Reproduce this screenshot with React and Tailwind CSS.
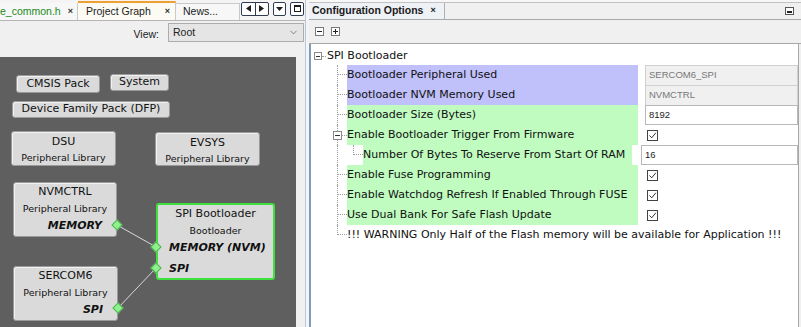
import React from "react";
import { ChevronDown } from "lucide-react";

const sans = "font-['DejaVu_Sans',sans-serif]";
const ui = "font-['Liberation_Sans',Arial,sans-serif]";

function TabButtons() {
  return (
    <div className="flex items-center gap-[4px] h-[20px] pb-[3px] ml-[1px]">
      <div className="w-[28px] h-[14px] rounded-[2px] border-[1.5px] border-[#2f3b50] bg-white flex">
        <div className="flex-1 flex items-center justify-center border-r border-[#2f3b50]">
          <svg width="5" height="7" viewBox="0 0 5 7"><path d="M5 0 L0 3.5 L5 7 Z" fill="#1d1d1d" /></svg>
        </div>
        <div className="flex-1 flex items-center justify-center">
          <svg width="5" height="7" viewBox="0 0 5 7"><path d="M0 0 L5 3.5 L0 7 Z" fill="#1d1d1d" /></svg>
        </div>
      </div>
      <div className="w-[13px] h-[14px] rounded-[2px] border-[1.5px] border-[#2f3b50] bg-white flex items-center justify-center">
        <svg width="7" height="4" viewBox="0 0 7 4"><path d="M0 0 L7 0 L3.5 4 Z" fill="#1d1d1d" /></svg>
      </div>
      <div className="w-[14px] h-[14px] rounded-[2px] border-[1.5px] border-[#2f3b50] bg-white flex items-center justify-center">
        <div className="w-[7px] h-[7px] border border-[#1d1d1d] border-t-2" />
      </div>
    </div>
  );
}

function Tabs() {
  return (
    <div className={`h-[20px] flex items-end bg-[#f4f4f4] ${ui} text-[10.5px]`}>
      <div className="w-[78px] h-[17px] flex items-center justify-between pr-[4px] border-r border-[#c9c9c9] bg-[#f7f7f7]">
        <span className="text-[#208a20]">e_common.h</span>
        <span className="text-[9px] font-bold text-[#333]">×</span>
      </div>
      <div className="w-[98px] h-[19px] flex items-center justify-between pl-[8px] pr-[5px] border-t-2 border-t-[#f0a030] border-r border-r-[#c9c9c9] bg-[#fbfaf3] text-[#222]">
        <span>Project Graph</span>
        <span className="text-[9px] font-bold text-[#333]">×</span>
      </div>
      <div className="w-[64px] h-[17px] flex items-center pl-[7px] border-t border-r border-[#c9c9c9] bg-[#f7f7f7] text-[#222]">
        News...
      </div>
      <TabButtons />
    </div>
  );
}

function Node({ x, y, w, h, green, className = "", children }) {
  return (
    <div
      className={`absolute rounded-[3px] bg-[#dadada] flex flex-col ${sans} text-[#111] ${
        green ? "border-2 border-[#3ee03e]" : "border border-[#9a9a9a] shadow-[inset_1px_1px_0_#f2f2f2]"
      } ${className}`}
      style={{ left: x, top: y, width: w, height: h }}
    >
      {children}
    </div>
  );
}

function Diamond({ x, y }) {
  return (
    <div
      className="absolute w-[8px] h-[8px] rotate-45 bg-[#8ff08f] border border-[#4fb54f]"
      style={{ left: x - 4, top: y - 4 }}
    />
  );
}

function Graph() {
  return (
    <div className="w-[296px] h-full relative bg-[#5f5f5f] overflow-hidden">
      <Node x={16} y={18} w={84} h={18} className="items-center justify-center text-[11px]">CMSIS Pack</Node>
      <Node x={110} y={17} w={59} h={17} className="items-center justify-center text-[11px]">System</Node>
      <Node x={12} y={44} w={158} h={17} className="items-center justify-center text-[11px]">Device Family Pack (DFP)</Node>
      <Node x={11} y={74} w={105} h={35} className="items-center pt-[2px]">
        <span className="text-[11px] leading-[15px]">DSU</span>
        <span className="text-[9.5px] leading-[14px] mt-[2px]">Peripheral Library</span>
      </Node>
      <Node x={155} y={75} w={105} h={34} className="items-center pt-[2px]">
        <span className="text-[11px] leading-[15px]">EVSYS</span>
        <span className="text-[9.5px] leading-[14px] mt-[2px]">Peripheral Library</span>
      </Node>
      <Node x={13} y={125} w={104} h={55} className="items-center">
        <span className="text-[11px] leading-[17px]">NVMCTRL</span>
        <span className="text-[9.5px] leading-[17px]">Peripheral Library</span>
        <span className="self-end pr-[14px] text-[11px] leading-[17px] font-bold italic">MEMORY</span>
      </Node>
      <Node x={13} y={209} w={105} h={55} className="items-center">
        <span className="text-[11px] leading-[17px]">SERCOM6</span>
        <span className="text-[9.5px] leading-[17px]">Peripheral Library</span>
        <span className="self-end pr-[14px] text-[11px] leading-[17px] font-bold italic">SPI</span>
      </Node>
      <Node x={156} y={146} w={119} h={77} green>
        <span className="self-center text-[11px] leading-[17px]">SPI Bootloader</span>
        <span className="self-center text-[9.5px] leading-[17px]">Bootloader</span>
        <span className="pl-[11px] text-[11px] leading-[17px] font-bold italic">MEMORY (NVM)</span>
        <span className="pl-[11px] mt-[4px] text-[11px] leading-[17px] font-bold italic">SPI</span>
      </Node>
      <svg className="absolute left-0 top-0" width="296" height="270">
        <line x1="117" y1="168" x2="156" y2="190" stroke="#d8d8d8" strokeWidth="1" />
        <line x1="118" y1="251" x2="156" y2="211" stroke="#d8d8d8" strokeWidth="1" />
      </svg>
      <Diamond x={117} y={168} />
      <Diamond x={156} y={190} />
      <Diamond x={156} y={211} />
      <Diamond x={118} y={251} />
    </div>
  );
}

function LeftPanel() {
  return (
    <div className="w-[305px] h-full flex flex-col">
      <Tabs />
      <div className="flex-1 flex flex-col border-t border-[#b5b5b5] bg-[#f0f0f0] min-h-0">
        <div className={`h-[36px] flex items-start justify-end pt-[2px] ${ui} text-[10.5px] text-[#222]`}>
          <span className="mt-[4px] mr-[9px]">View:</span>
          <div className="w-[136px] h-[19px] mr-[1px] flex items-center justify-between pl-[4px] pr-[4px] bg-[#e5e5e5] border border-[#adadad]">
            <span>Root</span>
            <ChevronDown size={11} strokeWidth={1.5} color="#555" />
          </div>
        </div>
        <div className="flex-1 flex min-h-0">
          <Graph />
          <div className="flex-1 bg-[#f0f0f0]" />
        </div>
      </div>
    </div>
  );
}

function CheckBox() {
  return (
    <div className="ml-[2px] w-[11px] h-[11px] border border-[#444] bg-white flex items-center justify-center">
      <svg width="9" height="9" viewBox="0 0 9 9">
        <path d="M1.5 4.5 L3.8 6.8 L7.8 1.8" fill="none" stroke="#333" strokeWidth="1" />
      </svg>
    </div>
  );
}

function Field({ value, readOnly, last, className = "" }) {
  return (
    <div
      className={`flex-1 h-[20px] flex items-center pl-[3px] border-x border-t ${last ? "border-b" : ""} ${
        readOnly ? "bg-[#f0f0f0] text-[#777] border-[#d0d0d0]" : "bg-white text-[#222] border-[#b8b8b8]"
      } ${ui} text-[9.5px] ${className}`}
    >
      {value}
    </div>
  );
}

function Connector({ last, box }) {
  return (
    <div className={`w-[10px] h-[20px] flex flex-col ${last ? "" : "border-l border-dotted border-[#9a9a9a]"}`}>
      {box ? (
        <div className="h-full flex items-center">
          <div className="-ml-[5px] w-[9px] h-[9px] border border-[#8a8a8a] bg-white flex items-center justify-center">
            <div className="w-[5px] h-px bg-[#333]" />
          </div>
          <div className="flex-1 border-t border-dotted border-[#9a9a9a]" />
        </div>
      ) : (
        <div className={`h-[10px] border-b border-dotted border-[#9a9a9a] ${last ? "border-l" : ""}`} />
      )}
    </div>
  );
}

function Row({ label, bg, children, box, last }) {
  return (
    <div className="h-[20px] flex items-center">
      <div className="w-[26px]" />
      <Connector box={box} last={last} />
      <div className={`${bg ? "w-[291px]" : "flex-1"} h-full flex items-center ${bg || ""} text-[11px] text-[#111] whitespace-nowrap`}>
        {label}
      </div>
      {bg && <div className="w-[7px]" />}
      {bg && <div className="flex-1 h-full flex items-center">{children}</div>}
    </div>
  );
}

function RightPanel() {
  const purple = "bg-[#c0c0fa]";
  const green = "bg-[#c0fcc0]";
  return (
    <div className="flex-1 h-full flex flex-col bg-[#f0f0f0]">
      <div className="h-[3px] bg-[#f7f7f7] border-b border-[#c2c2c2]" />
      <div className="h-[17px] flex items-stretch border-b border-[#a8a8a8]">
        <div className={`w-[136px] flex items-center pl-[3px] gap-[7px] bg-[#eef1f5] border-r border-[#b0b0b0] ${ui} text-[10.5px] font-bold text-[#1a1a1a]`}>
          <span>Configuration Options</span>
          <span className="text-[9px]">×</span>
        </div>
        <div className="flex-1 flex items-center justify-end pr-[7px]">
          <div className="w-[9px] h-[8px] border border-[#555] bg-white flex items-end justify-center pb-[1px]">
            <div className="w-[5px] h-[2px] bg-[#222]" />
          </div>
        </div>
      </div>
      <div className="h-[24px] flex items-center gap-[7px] pl-[6px] border-b border-[#a8a8a8]">
        <div className="w-[9px] h-[9px] border border-[#7a7a7a] bg-white flex items-center justify-center">
          <div className="w-[5px] h-px bg-[#222]" />
        </div>
        <div className="w-[9px] h-[9px] border border-[#7a7a7a] bg-white flex items-center justify-center relative">
          <div className="w-[5px] h-px bg-[#222]" />
          <div className="absolute w-px h-[5px] bg-[#222]" />
        </div>
      </div>
      <div className={`flex-1 flex flex-col bg-white border-l-2 border-l-[#7f9bbb] border-r border-r-[#a8a8a8] mr-[2px] ${sans}`}>
        <div className="h-[21px] flex items-center pl-[3px] pt-[3px]">
          <div className="w-[8px] h-[8px] border border-[#8a8a8a] bg-white flex items-center justify-center">
            <div className="w-[4px] h-px bg-[#333]" />
          </div>
          <div className="w-[4px] border-t border-dotted border-[#9a9a9a]" />
          <span className="ml-[1px] text-[11px] text-[#111]">SPI Bootloader</span>
        </div>
        <Row label="Bootloader Peripheral Used" bg={purple}>
          <Field value="SERCOM6_SPI" readOnly />
        </Row>
        <Row label="Bootloader NVM Memory Used" bg={purple}>
          <Field value="NVMCTRL" readOnly />
        </Row>
        <Row label="Bootloader Size (Bytes)" bg={green}>
          <Field value="8192" last />
        </Row>
        <Row label="Enable Bootloader Trigger From Firmware" bg={green} box>
          <CheckBox />
        </Row>
        <div className="h-[20px] flex items-center">
          <div className="w-[26px]" />
          <div className="w-[10px] h-full border-l border-dotted border-[#9a9a9a]" />
          <div className="w-[6px]" />
          <div className="w-[10px] h-full">
            <div className="h-[10px] border-l border-b border-dotted border-[#9a9a9a]" />
          </div>
          <div className={`w-[269px] h-full flex items-center ${green} text-[11px] text-[#111] whitespace-nowrap`}>
            Number Of Bytes To Reserve From Start Of RAM
          </div>
          <div className="w-[9px] h-full" />
          <Field value="16" last className="border-[#a8a8a8]" />
        </div>
        <Row label="Enable Fuse Programming" bg={green}>
          <CheckBox />
        </Row>
        <Row label="Enable Watchdog Refresh If Enabled Through FUSE" bg={green}>
          <CheckBox />
        </Row>
        <Row label="Use Dual Bank For Safe Flash Update" bg={green}>
          <CheckBox />
        </Row>
        <Row label="!!! WARNING Only Half of the Flash memory will be available for Application !!!" last />
      </div>
    </div>
  );
}

export default function App() {
  return (
    <div className="w-[801px] h-[327px] flex bg-[#f0f0f0] overflow-hidden">
      <LeftPanel />
      <div className="w-[4px] h-full border-l border-[#b9c7d8] bg-[#f4f4f4]" />
      <RightPanel />
    </div>
  );
}
